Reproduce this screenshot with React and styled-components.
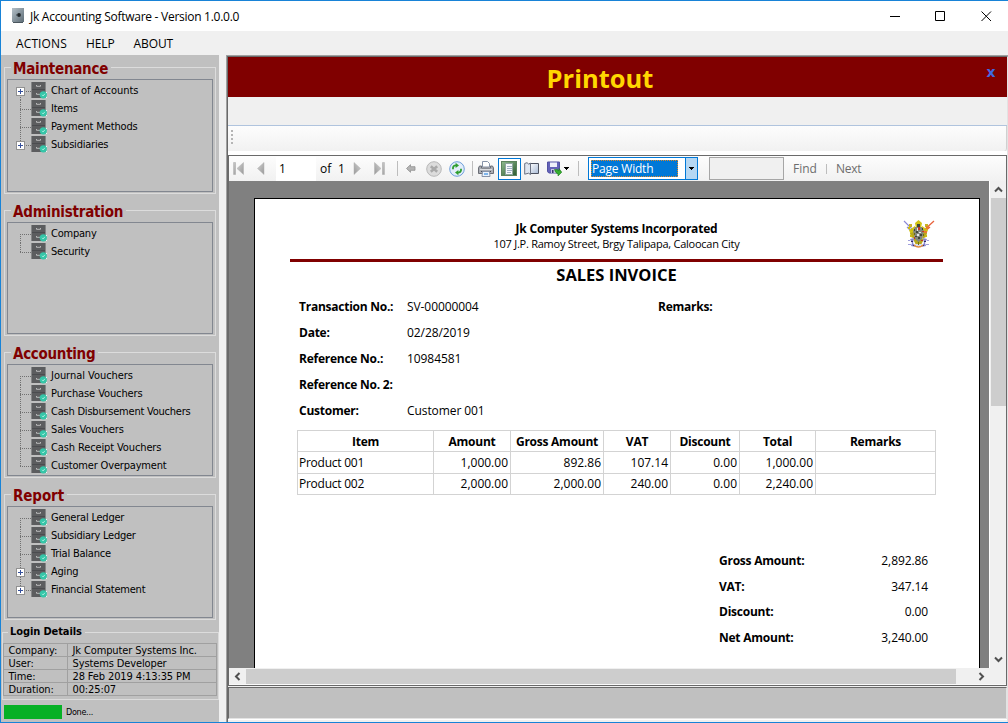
import React from "react";
import styled, { createGlobalStyle } from "styled-components";

const TAHOMA = `"DejaVu Sans Condensed", "DejaVu Sans", sans-serif`;
const SEGOE = `"Open Sans", "Noto Sans", sans-serif`;

const Global = createGlobalStyle`
  * { box-sizing: border-box; }
  html, body { margin: 0; padding: 0; overflow: hidden; }
  svg { display: block; flex: none; }
`;

const Window = styled.div`
  width: 1008px;
  height: 723px;
  display: flex;
  flex-direction: column;
  background: #f0f0f0;
  border: solid #1883d7;
  border-width: 1px 0 1px 1px;
  color: #000;
  white-space: nowrap;
  overflow: hidden;
`;

const Label = styled.span`
  letter-spacing: ${(p) => p.$track || 0}px;
`;

/* ---------- title bar and menu ---------- */

const TitleBar = styled.header`
  height: 30px;
  flex: none;
  display: flex;
  align-items: center;
  background: #fff;
  padding-left: 10px;
  font: 12px ${SEGOE};
  > span { margin-left: 6px; flex: 1; }
`;

const CaptionButtons = styled.div`
  display: flex;
  gap: 35px;
  padding-right: 16px;
`;

const MenuBar = styled.nav`
  height: 24px;
  flex: none;
  display: flex;
  align-items: center;
  gap: 19px;
  padding: 1px 0 0 15px;
  font: 12px ${SEGOE};
`;

/* ---------- sidebar ---------- */

const Body = styled.div`
  flex: 1;
  display: flex;
  min-height: 0;
`;

const Sidebar = styled.aside`
  width: 218px;
  flex: none;
  background: #c0c0c0;
  padding: 12px 0 0 1px;
`;

const Group = styled.section`
  width: 212px;
  height: ${(p) => p.$h}px;
  margin: 0 0 16px 2px;
  border: 1px solid #dcdcdc;
  padding: 0 2px;
`;

const GroupTitle = styled.h2`
  width: max-content;
  height: 20px;
  margin: -10px 0 1px 4px;
  padding: 0 3px 0 2px;
  background: #c0c0c0;
  color: #800000;
  font: bold 15px/22px ${TAHOMA};
`;

const Tree = styled.ul`
  list-style: none;
  margin: 0;
  padding: 2px 0 0;
  height: ${(p) => p.$h}px;
  border: 1px solid #828790;
`;

const TreeRow = styled.li`
  display: flex;
  height: 18px;
  font: 11px/18px ${TAHOMA};
  > span { margin-left: 3px; }
`;

const LoginBox = styled.section`
  width: 217px;
  height: 68px;
  margin-top: -4px;
  border: 1px solid #dcdcdc;
`;

const LoginTitle = styled.h3`
  width: max-content;
  height: 16px;
  margin: -9px 0 3px 5px;
  padding: 0 3px 0 2px;
  background: #c0c0c0;
  font: bold 11px/16px ${TAHOMA};
  letter-spacing: -0.1px;
`;

const LoginTable = styled.dl`
  display: grid;
  grid-template-columns: 64px 149px;
  grid-auto-rows: 13px;
  width: 214px;
  margin: 0;
  border: solid #a0a0a0;
  border-width: 1px 0 0 1px;
  font: 11px/13px ${TAHOMA};
  letter-spacing: -0.12px;
`;

const LoginCell = styled.dd`
  margin: 0;
  padding-left: 4.5px;
  border: solid #a0a0a0;
  border-width: 0 1px 1px 0;
`;

const StatusRow = styled.div`
  display: flex;
  align-items: center;
  height: 14px;
  margin: 5px 0 0 2px;
  font: 9px ${TAHOMA};
`;

const Progress = styled.div`
  width: 58px;
  height: 14px;
  background: #06b025;
  margin-right: 4px;
`;

/* ---------- main panel ---------- */

const Main = styled.main`
  flex: 1;
  margin-left: 7px;
  display: flex;
  flex-direction: column;
  border: solid #a0a0a0;
  border-width: 1px 0 0 1px;
`;

const MainInner = styled.div`
  flex: 1;
  display: flex;
  flex-direction: column;
  border: solid #696969;
  border-width: 1px 0 0 1px;
  border-right: 1px solid #e3e3e3;
`;

const Banner = styled.div`
  height: 40px;
  display: flex;
  background: #800000;
  color: #ffd700;
  font: bold 25.5px/43px ${SEGOE};
  > h1 { flex: 1; margin: 0; padding-right: 3px; font: inherit; text-align: center; }
`;

const BannerClose = styled.button`
  width: 32px;
  height: 30px;
  border: 0;
  padding: 0;
  background: none;
  color: #4169e1;
  font: bold 14px/27px "DejaVu Sans", sans-serif;
`;

const Strip = styled.div`
  height: 29px;
  border-bottom: 1px solid #b0c4de;
`;

const GripBar = styled.div`
  height: 25px;
  padding: 4px 0 0 3px;
  border-right: 1px solid #d0d0d0;
  border-radius: 0 0 3px 3px;
  background: linear-gradient(#fdfdfd, #f1f1f1);
`;

const GripGap = styled.div`
  height: 4px;
  background: #fff;
`;

const Viewer = styled.div`
  height: 531px;
  flex: none;
  display: flex;
  flex-direction: column;
  border: 1px solid #696969;
`;

const Toolbar = styled.div`
  height: 25px;
  flex: none;
  display: flex;
  align-items: center;
  padding-left: 4px;
  background: linear-gradient(#fdfdfd, #f1f1f1);
  font: 12px/16px ${SEGOE};
`;

const Tool = styled.div`
  width: ${(p) => p.$w}px;
  margin-right: ${(p) => p.$gap}px;
  flex: none;
  color: ${(p) => (p.$off ? "#6d6d6d" : "#000")};
`;

const ToolSeparator = styled.div`
  width: 1px;
  height: ${(p) => p.$h || 15}px;
  flex: none;
  margin-right: ${(p) => p.$gap}px;
  background: #bdbdbd;
`;

const PageInput = styled(Tool)`
  height: 24px;
  padding-left: 3px;
  line-height: 23px;
  background: #fff;
`;

const PressedTool = styled(Tool)`
  height: 22px;
  padding: 2px 2px;
  border: 1px solid #0078d7;
  background: #fff;
`;

const Combo = styled(Tool)`
  height: 23px;
  display: flex;
  border: 1px solid #0078d7;
  background: #fff;
`;

const ComboText = styled.div`
  width: 87px;
  height: 17px;
  margin: 2px 7px 2px 2px;
  background: #0078d7;
  outline: 1px dotted #e08828;
  outline-offset: -1px;
  color: #fff;
  padding-left: 1px;
  line-height: 18px;
  letter-spacing: -0.2px;
`;

const ComboArrow = styled.div`
  flex: 1;
  display: flex;
  align-items: center;
  justify-content: center;
  border-left: 1px solid #0078d7;
  background: #b5d7f3;
`;

const FindInput = styled(Tool)`
  height: 23px;
  border: 1px solid #a6a6a6;
  background: #f0f0f0;
`;

const Canvas = styled.div`
  flex: 1;
  min-height: 0;
  display: flex;
  background: #808080;
`;

const PageArea = styled.div`
  width: 760px;
  padding: 17px 9px 0 25px;
  overflow: hidden;
`;

const VScroll = styled.div`
  width: 17px;
  display: flex;
  flex-direction: column;
  align-items: center;
  background: #f0f0f0;
  border-left: 1px solid #fff;
`;

const HScroll = styled.div`
  height: 17px;
  display: flex;
  align-items: center;
  background: #f0f0f0;
  border-bottom: 1px solid #fafafa;
`;

const ScrollEnd = styled.div`
  width: 17px;
  height: 17px;
  display: grid;
  place-items: center;
`;

const VThumb = styled.div`
  width: 15px;
  height: 208px;
  margin-bottom: auto;
  background: #cdcdcd;
`;

const HThumb = styled.div`
  width: 710px;
  height: 15px;
  margin-right: 17px;
  background: #cdcdcd;
`;

const BottomPanel = styled.div`
  height: 32px;
  margin: 1px 0 0;
  background: #c0c0c0;
  border: 1px solid #696969;
  border-right-color: #e3e3e3;
  border-bottom-color: #e3e3e3;
`;

const BottomGap = styled.div`
  height: 3px;
  border-top: 1px solid #fff;
`;

/* ---------- invoice ---------- */

const Paper = styled.article`
  height: 480px;
  border: 1px solid #000;
  border-bottom: 0;
  background: #fff;
  padding: 20px 36px 0 35px;
  font: 12px/18px ${SEGOE};
`;

const Letterhead = styled.header`
  display: flex;
  height: 43px;
  border-bottom: 3px solid #800000;
  margin-bottom: 2px;
  > div { flex: 1; padding-left: 41px; text-align: center; }
  > svg { margin: 0 7px 0 0; }
`;

const CompanyName = styled.div`
  height: 17px;
  font: bold 12px/19px ${SEGOE};
  letter-spacing: -0.22px;
`;

const Address = styled.div`
  font: 11px/16px ${SEGOE};
  letter-spacing: -0.25px;
`;

const DocTitle = styled.h2`
  margin: 0 0 8px;
  text-align: center;
  font: bold 16.5px/22px ${SEGOE};
`;

const Fields = styled.dl`
  display: grid;
  grid-template-columns: 108px 251px 1fr;
  grid-auto-rows: 26px;
  align-items: center;
  margin: 0 0 6px 9px;
  dd { margin: 0; letter-spacing: -0.08px; }
  dt { font-weight: bold; letter-spacing: -0.25px; }
`;

const Items = styled.table`
  width: 639px;
  margin-left: 7px;
  table-layout: fixed;
  border-collapse: collapse;
  th, td {
    height: 21px;
    padding: 0 2px;
    border: 1px solid #d3d3d3;
    line-height: 16px;
    text-align: right;
  }
  th { text-align: center; padding: 1px 0 0; letter-spacing: -0.25px; }
  tbody tr:first-child td { height: 22px; }
  td:first-child { text-align: left; padding-left: 1px; letter-spacing: -0.25px; }
`;

const Totals = styled.dl`
  display: grid;
  grid-template-columns: 109px 100px;
  grid-auto-rows: 25.7px;
  align-items: center;
  margin: 53px 0 0 429px;
  dt { font-weight: bold; letter-spacing: -0.24px; }
  dd { margin: 0; text-align: right; letter-spacing: -0.1px; }
`;

/* ---------- icons ---------- */

const CabinetIcon = () => (
  <svg width="17" height="17" viewBox="0 0 17 17">
    <path d="M0 0H14V16H0z" fill="#5c5d5f" />
    <path d="M0 0H1V16H0zM14 0H15V16H14z" fill="#858687" />
    <path d="M1 7.500H14" stroke="#4b4c4f" />
    <path d="M5.500 3v1.300H9.500V3M5.500 11v1.300H9" fill="none" stroke="#c4c4c4" strokeWidth=".9" />
    <circle cx="12.300" cy="12.800" r="3.600" fill="#35c6a8" />
    <path d="M11 12.800l1.100 1.100 1.800-2.100" fill="none" stroke="#c9f7ec" strokeWidth=".8" />
    <path d="M15 10h1v1h-1zM15 15h1v1h-1z" fill="#e8fbf6" />
  </svg>
);

const TreeGuide = ({ first, last, plus }) => (
  <svg width="23" height="18" viewBox="0 0 23 18" shapeRendering="crispEdges">
    <path
      d={`M12.5 ${first ? 9 : 0}V${last ? 10 : 18}M12 9.5H23`}
      stroke="#707070"
      strokeDasharray="1 1"
      fill="none"
    />
    {plus && (
      <g>
        <rect x="8.5" y="5.5" width="8" height="8" fill="#fff" stroke="#919191" />
        <path d="M10 9.5H15M12.5 7V12" stroke="#35509c" />
      </g>
    )}
  </svg>
);

const SafeIcon = () => (
  <svg width="13" height="16" viewBox="0 0 13 16">
    <defs>
      <linearGradient id="safe" x1="0" y1="0" x2="1" y2="1">
        <stop offset="0" stopColor="#b4c0c8" />
        <stop offset="1" stopColor="#5d6c76" />
      </linearGradient>
    </defs>
    <path d="M1 0H13V14H1z" fill="url(#safe)" />
    <path d="M2 14H12V15H2z" fill="#4a565e" />
    <path d="M8.500 4v5" stroke="#8d9ba4" />
    <circle cx="8" cy="7" r="1.900" fill="#20262a" />
    <path d="M5 7H6" stroke="#38434a" />
  </svg>
);

const Chevron = ({ d }) => (
  <svg width="9" height="9" viewBox="0 0 9 9">
    <path d={d} fill="none" stroke="#505050" strokeWidth="2" />
  </svg>
);

const NavIcon = ({ flip, bar }) => (
  <svg width={bar ? 11 : 8} height="13" viewBox={bar ? "0 0 11 13" : "0 0 8 13"}>
    <defs>
      <linearGradient id="nav" x1="0" y1="0" x2="1" y2="1">
        <stop offset="0" stopColor="#d2d2d2" />
        <stop offset="1" stopColor="#989898" />
      </linearGradient>
    </defs>
    <g transform={flip ? `translate(${bar ? 11 : 8} 0) scale(-1 1)` : undefined}>
      {bar && <path d="M.5 .5H2.5V12.5H.5z" fill="url(#nav)" stroke="#a8a8a8" strokeWidth=".5" />}
      <path
        d={bar ? "M10.5 .5V12.5L4 6.5z" : "M7 .5V12.5L.5 6.5z"}
        fill="url(#nav)"
        stroke="#b0b0b0"
        strokeWidth=".5"
      />
    </g>
  </svg>
);

const BackIcon = () => (
  <svg width="10" height="9" viewBox="0 0 10 9">
    <path d="M.5 4.5L4.5 .7V2.7H9V6.3H4.5V8.3z" fill="#b4b4b4" stroke="#8f8f8f" strokeWidth=".8" />
  </svg>
);

const StopIcon = () => (
  <svg width="16" height="16" viewBox="0 0 16 16">
    <circle cx="8" cy="8" r="7.300" fill="#dcdcdc" stroke="#b8b8b8" />
    <path d="M4.800 5.300L11.200 10.700M11.200 5.300L4.800 10.700" stroke="#a9a9a9" strokeWidth="2.600" />
  </svg>
);

const RefreshIcon = () => (
  <svg width="16" height="16" viewBox="0 0 16 16">
    <circle cx="8" cy="8" r="7.3" fill="#e2edfa" stroke="#6f9fdb" />
    <path d="M4 8.2V6.6Q4.4 4.4 7 4.4" fill="none" stroke="#2f9e2f" strokeWidth="1.8" />
    <path d="M6.6 1.8L10 4.4L6.6 7z" fill="#2f9e2f" />
    <path d="M12 7.8V9.4Q11.6 11.6 9 11.6" fill="none" stroke="#2f9e2f" strokeWidth="1.8" />
    <path d="M9.4 9L6 11.6L9.4 14.2z" fill="#2f9e2f" />
  </svg>
);

const PrinterIcon = () => (
  <svg width="16" height="16" viewBox="0 0 16 16">
    <path d="M4.5 .5H9.5L11.5 2.500V6H4.500z" fill="#fff" stroke="#8793a8" />
    <path d="M1.5 5H3.500V7H12.500V5H14.500L15.500 7V12.500H.5V7z" fill="#a9acb3" stroke="#6a6d75" />
    <path d="M2 8.500H14" stroke="#dcdde1" />
    <path d="M3 10.500H13" stroke="#4a4d55" />
    <path d="M4.500 10.500H11.500L12 15.500H4z" fill="#eaf2fc" stroke="#8793a8" />
    <path d="M6 13H10" stroke="#5aa0e6" strokeWidth="1.500" />
  </svg>
);

const LayoutIcon = () => (
  <svg width="17" height="16" viewBox="0 0 17 16">
    <defs>
      <linearGradient id="lay" x1="0" y1="0" x2="1" y2="1">
        <stop offset="0" stopColor="#8fbb8f" />
        <stop offset="1" stopColor="#2c5a31" />
      </linearGradient>
    </defs>
    <rect x=".5" y=".5" width="15" height="14" fill="url(#lay)" stroke="#5b835e" />
    <rect x="4.500" y="2.500" width="7" height="11" fill="#f6f9fc" stroke="#8fa5a0" />
    <path d="M6 5.500H11M6 7.500H11M6 9.500H11M6 11.500H10" stroke="#9fb0c4" />
  </svg>
);

const PageSetupIcon = () => (
  <svg width="16" height="14" viewBox="0 0 16 14">
    <defs>
      <linearGradient id="book" x1="0" y1="0" x2="1" y2="1">
        <stop offset="0" stopColor="#fff" />
        <stop offset="1" stopColor="#a9bbd6" />
      </linearGradient>
    </defs>
    <path d="M5.500 1.500H14.500V11.500H5.500z" fill="url(#book)" stroke="#4d5260" />
    <path d="M.7 1.500L3 .7L4.800 2.200L6.500 1.200V12.600L4.600 11.200L.7 12.200z" fill="#dfe6f0" stroke="#6b7282" />
  </svg>
);

const SaveIcon = () => (
  <svg width="15" height="15" viewBox="0 0 15 15">
    <path d="M.5 1H12.5V12H1.8L.5 10.7z" fill="#6463b8" stroke="#5352a4" />
    <path d="M3 1.5H10V6H3z" fill="#eef0fa" />
    <path d="M4 8H9.5V12H4z" fill="#c3c4dd" />
    <path d="M5 9H6.5V12H5z" fill="#35356e" />
    <path d="M7.5 8.5L10 8.5L12 9.8V7.6L14.8 11.2L11 15V12.9Q8.6 12.4 7.5 8.5z" fill="#35ad2e" stroke="#1f7c1b" strokeWidth=".6" />
  </svg>
);

const DropIcon = () => (
  <svg width="5" height="3" viewBox="0 0 5 3" shapeRendering="crispEdges">
    <path d="M0 0H5V1H4V2H3V3H2V2H1V1H0z" fill="#000" />
  </svg>
);

const CrestIcon = () => (
  <svg width="34" height="31" viewBox="0 0 34 31">
    <path d="M2 2L12 12M5 8L11 14" stroke="#8a88d8" strokeWidth="1.100" />
    <path d="M32 2L21 12M28 8L22 13" stroke="#e8623c" strokeWidth="1.300" />
    <path d="M13 4L16.500 1L20 4L19 9H14zM7 11L13 7L14 13L9 16zM26 11L20 7L19 13L24 16z" fill="#d2c414" />
    <path d="M7 5H10V8H7zM23 5H26V8H23z" fill="#c9b422" />
    <path d="M8 14L12 13L13 20L9 18zM25 14L21 13L20 20L24 18zM11 20H22L19 26H14z" fill="#b5a81c" />
    <path d="M13 8H20L22 12L20 20L16.500 23L13 20L11 12z" fill="#83867c" />
    <path d="M6 8H8V10H6zM9 10H11V12H9zM22 10H24V12H22zM8 16H10V18H8zM23 16H25V18H23z" fill="#cdbb10" />
    <path d="M24 7H27V10H24zM22 12H25V14H22z" fill="#e87a30" />
    <path d="M15 5H18V8H15zM14 12H16V14H14zM18 15H20V17H18zM13 17H15V18H13zM12 10H13V12H12zM20 9H21V11H20zM16 18H18V20H16z" fill="#3f453c" />
    <path d="M16 8H18V11H16zM20 12H22V13H20zM12 18H13V20H12zM19 21H21V22H19z" fill="#c23a22" />
    <path d="M15 9H16V12H15zM17 13H19V14H17zM15 15H17V17H15z" fill="#e4e6ea" />
    <path d="M8 20L12 19L11 24L14 28L9 27L10 24zM25 20L21 19L22 24L19 28L24 27L23 24z" fill="#8785cf" />
    <path d="M6 21H8V22H6zM6 25H9V26H6zM25 21H27V22H25zM24 25H27V26H24z" fill="#9f9edc" />
    <path d="M9 22H11V23H9zM22 22H24V23H22zM11 26H13V27H11zM20 26H22V27H20z" fill="#2e2e60" />
    <path d="M12 26Q16.500 30 21 26" fill="none" stroke="#e08a3c" strokeWidth="1.200" />
    <path d="M14 25H19V27H14z" fill="#d5d7ee" />
    <path d="M16 23H17V26H16zM12 14H13V16H12zM21 15H22V17H21z" fill="#6f6d12" />
  </svg>
);

/* ---------- data ---------- */

const GROUPS = [
  {
    title: "Maintenance", track: -0.25, h: 127, treeH: 113,
    rows: [
      { name: "Chart of Accounts", plus: true, track: -0.04 },
      { name: "Items" },
      { name: "Payment Methods", track: -0.14 },
      { name: "Subsidiaries", plus: true },
    ],
  },
  {
    title: "Administration", track: -0.22, h: 126, treeH: 112,
    rows: [{ name: "Company" }, { name: "Security" }],
  },
  {
    title: "Accounting", track: -0.3, h: 126, treeH: 112,
    rows: [
      { name: "Journal Vouchers", track: -0.04 },
      { name: "Purchase Vouchers", track: -0.1 },
      { name: "Cash Disbursement Vouchers" },
      { name: "Sales Vouchers", track: -0.15 },
      { name: "Cash Receipt Vouchers", track: -0.12 },
      { name: "Customer Overpayment", track: -0.18 },
    ],
  },
  {
    title: "Report", track: -0.1, h: 126, treeH: 112,
    rows: [
      { name: "General Ledger" },
      { name: "Subsidiary Ledger", track: -0.26 },
      { name: "Trial Balance" },
      { name: "Aging", plus: true },
      { name: "Financial Statement", plus: true },
    ],
  },
];

const LOGIN = [
  ["Company:", "Jk Computer Systems Inc."],
  ["User:", "Systems Developer"],
  ["Time:", "28 Feb 2019 4:13:35 PM"],
  ["Duration:", "00:25:07"],
];

const FIELDS = [
  ["Transaction No.:", "SV-00000004", "Remarks:"],
  ["Date:", "02/28/2019"],
  ["Reference No.:", "10984581"],
  ["Reference No. 2:", ""],
  ["Customer:", "Customer 001"],
];

const COLUMNS = [["Item", 136], ["Amount", 77], ["Gross Amount", 93], ["VAT", 67], ["Discount", 69], ["Total", 76], ["Remarks", 120]];

const ITEMS = [
  ["Product 001", "1,000.00", "892.86", "107.14", "0.00", "1,000.00", ""],
  ["Product 002", "2,000.00", "2,000.00", "240.00", "0.00", "2,240.00", ""],
];

const TOTALS = [
  ["Gross Amount:", "2,892.86"],
  ["VAT:", "347.14"],
  ["Discount:", "0.00"],
  ["Net Amount:", "3,240.00"],
];

function SidePanel() {
  return (
    <Sidebar>
      {GROUPS.map((g) => (
        <Group key={g.title} $h={g.h}>
          <GroupTitle><Label $track={g.track}>{g.title}</Label></GroupTitle>
          <Tree $h={g.treeH}>
            {g.rows.map(({ name, plus, track = -0.22 }, i) => (
              <TreeRow key={name}>
                <TreeGuide first={i === 0} last={i === g.rows.length - 1} plus={plus} />
                <CabinetIcon />
                <Label $track={track}>{name}</Label>
              </TreeRow>
            ))}
          </Tree>
        </Group>
      ))}
      <LoginBox>
        <LoginTitle>Login Details</LoginTitle>
        <LoginTable>
          {LOGIN.map(([k, v]) => (
            <React.Fragment key={k}>
              <LoginCell as="dt">{k}</LoginCell>
              <LoginCell>{v}</LoginCell>
            </React.Fragment>
          ))}
        </LoginTable>
      </LoginBox>
      <StatusRow><Progress /><Label $track={-0.3}>Done...</Label></StatusRow>
    </Sidebar>
  );
}

function ReportToolbar() {
  return (
    <Toolbar>
      <Tool $w={11} $gap={13}><NavIcon bar /></Tool>
      <Tool $w={8} $gap={11}><NavIcon /></Tool>
      <PageInput $w={40} $gap={4}>1</PageInput>
      <Tool $w={11} $gap={7}>of</Tool>
      <Tool $w={7} $gap={8}>1</Tool>
      <Tool $w={8} $gap={13}><NavIcon flip /></Tool>
      <Tool $w={11} $gap={12}><NavIcon flip bar /></Tool>
      <ToolSeparator $gap={8} />
      <Tool $w={10} $gap={10}><BackIcon /></Tool>
      <Tool $w={16} $gap={7}><StopIcon /></Tool>
      <Tool $w={16} $gap={7}><RefreshIcon /></Tool>
      <ToolSeparator $gap={5} />
      <Tool $w={16} $gap={4}><PrinterIcon /></Tool>
      <PressedTool $w={23} $gap={3}><LayoutIcon /></PressedTool>
      <Tool $w={16} $gap={7}><PageSetupIcon /></Tool>
      <Tool $w={15} $gap={2}><SaveIcon /></Tool>
      <Tool $w={5} $gap={9}><DropIcon /></Tool>
      <ToolSeparator $gap={9} />
      <Combo $w={110} $gap={11}>
        <ComboText>Page Width</ComboText>
        <ComboArrow><DropIcon /></ComboArrow>
      </Combo>
      <FindInput $w={75} $gap={9} />
      <Tool $w={24} $gap={9} $off>Find</Tool>
      <ToolSeparator $gap={9} $h={10} />
      <Tool $w={26} $gap={0} $off>
        <Label $track={-0.3}>Next</Label>
      </Tool>
    </Toolbar>
  );
}

function Invoice() {
  return (
    <Paper>
      <Letterhead>
        <div>
          <CompanyName>Jk Computer Systems Incorporated</CompanyName>
          <Address>107 J.P. Ramoy Street, Brgy Talipapa, Caloocan City</Address>
        </div>
        <CrestIcon />
      </Letterhead>
      <DocTitle>SALES INVOICE</DocTitle>
      <Fields>
        {FIELDS.map(([k, v, extra]) => (
          <React.Fragment key={k}>
            <dt>{k}</dt>
            <dd>{v}</dd>
            <dt>{extra}</dt>
          </React.Fragment>
        ))}
      </Fields>
      <Items>
        <colgroup>{COLUMNS.map(([name, w]) => <col key={name} width={w} />)}</colgroup>
        <thead>
          <tr>{COLUMNS.map(([name]) => <th key={name}>{name}</th>)}</tr>
        </thead>
        <tbody>
          {ITEMS.map((row) => (
            <tr key={row[0]}>{row.map((cell, i) => <td key={i}>{cell}</td>)}</tr>
          ))}
        </tbody>
      </Items>
      <Totals>
        {TOTALS.map(([k, v]) => (
          <React.Fragment key={k}>
            <dt>{k}</dt>
            <dd>{v}</dd>
          </React.Fragment>
        ))}
      </Totals>
    </Paper>
  );
}

export default function App() {
  return (
    <Window>
      <Global />
      <TitleBar>
        <SafeIcon />
        <Label $track={-0.27}>Jk Accounting Software - Version 1.0.0.0</Label>
        <CaptionButtons>
          <svg width="11" height="11"><path d="M1 5.500H11" stroke="#000" /></svg>
          <svg width="11" height="11"><path d="M.5 .5H9.500V9.500H.5z" fill="none" stroke="#000" /></svg>
          <svg width="11" height="11"><path d="M.5 .5L10 10M10 .5L.5 10" stroke="#000" /></svg>
        </CaptionButtons>
      </TitleBar>
      <MenuBar>
        <Label $track={0.12}>ACTIONS</Label>
        <Label $track={-0.1}>HELP</Label>
        <Label $track={-0.1}>ABOUT</Label>
      </MenuBar>
      <Body>
        <SidePanel />
        <Main>
          <MainInner>
            <Banner>
              <h1>Printout</h1>
              <BannerClose>x</BannerClose>
            </Banner>
            <Strip />
            <GripBar>
              <svg width="4" height="16"><path d="M1 0V16" stroke="#b5b5b5" strokeWidth="2" strokeDasharray="2 2" /></svg>
            </GripBar>
            <GripGap />
            <Viewer>
              <ReportToolbar />
              <Canvas>
                <PageArea><Invoice /></PageArea>
                <VScroll>
                  <ScrollEnd><Chevron d="M1 6.500L4.500 3L8 6.500" /></ScrollEnd>
                  <VThumb />
                  <ScrollEnd><Chevron d="M1 2.500L4.500 6L8 2.500" /></ScrollEnd>
                </VScroll>
              </Canvas>
              <HScroll>
                <ScrollEnd><Chevron d="M6.500 1L3 4.500L6.500 8" /></ScrollEnd>
                <HThumb />
                <ScrollEnd><Chevron d="M2.500 1L6 4.500L2.500 8" /></ScrollEnd>
              </HScroll>
            </Viewer>
            <BottomPanel />
            <BottomGap />
          </MainInner>
        </Main>
      </Body>
    </Window>
  );
}
